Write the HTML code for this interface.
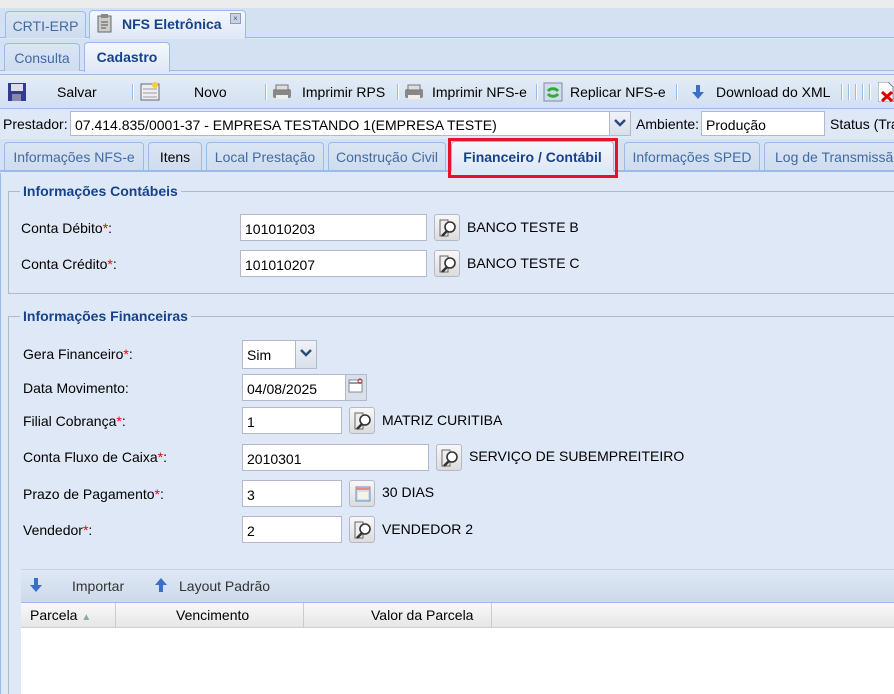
<!DOCTYPE html>
<html style="overflow:hidden"><head><meta charset="utf-8"><style>
*{box-sizing:border-box;margin:0;padding:0}
html,body{width:894px;height:694px;overflow:hidden}
body{background:#dfe8f6;font-family:"Liberation Sans",Arial,sans-serif;font-size:14px;color:#000;position:relative;white-space:nowrap}
.a{position:absolute}
.tab{position:absolute;border:1px solid #99bbe8;border-bottom:none;border-radius:4px 4px 0 0;background:linear-gradient(#dbe6f4,#cedcee);color:#416aa3;font-size:14px;text-align:center}
.tab.on{background:linear-gradient(#f4f8fd,#dfe8f6);color:#15428b;font-weight:bold}
.inp{position:absolute;background:#fff;border:1px solid #b5b8c8;font-size:14px;padding:6px 0 0 4px;height:27px}
.lbl{position:absolute;font-size:14px}
.r{color:#e00}
.btn{position:absolute;width:26px;height:27px;border:1px solid #b5b8c8;border-radius:3px;background:linear-gradient(#f8f8f8,#dcdcdc)}
.btn svg{position:absolute;left:3px;top:3px}
.sep{position:absolute;top:84px;width:2px;height:16px;border-left:1px solid #99bbe8;border-right:1px solid #fff}
.fs{position:absolute;border:1px solid #b5b8c8;border-right:none}
.lg{position:absolute;color:#15428b;font-weight:bold;font-size:14px;padding:0 3px;background:#dfe8f6}
</style></head><body>
<div class="a" style="left:0;top:0;width:894px;height:8px;background:#ececec"></div>
<div class="a" style="left:0;top:8px;width:894px;height:30px;background:#d4e1f2;border-bottom:1px solid #99bbe8"></div>
<div class="tab" style="left:5px;top:11px;width:81px;height:27px;padding-top:6px">CRTI-ERP</div>
<div class="tab on" style="left:89px;top:10px;width:157px;height:29px;padding-top:5px;text-align:left;padding-left:32px;border-bottom:1px solid #dfe8f6">NFS Eletrônica</div>
<svg class="a" style="left:96px;top:13px" width="18" height="20"><rect x="2" y="3" width="13" height="16" fill="#ccc" stroke="#666"/><rect x="5" y="1" width="7" height="4" fill="#888"/><path d="M5 9h7M5 12h7M5 15h5" stroke="#555"/></svg>
<div class="a" style="left:230px;top:13px;width:11px;height:11px;background:#c8d4e6;border:1px solid #99a;font-size:8px;line-height:9px;text-align:center;color:#557">×</div>
<div class="a" style="left:0;top:39px;width:894px;height:32px;background:#d4e1f2;border-bottom:1px solid #99bbe8"></div>
<div class="tab" style="left:4px;top:43px;width:76px;height:28px;padding-top:6px">Consulta</div>
<div class="tab on" style="left:84px;top:42px;width:86px;height:30px;padding-top:6px">Cadastro</div>
<div class="a" style="left:0;top:74px;width:894px;height:35px;background:linear-gradient(#e4ecf7,#d3e0f1);border-top:1px solid #99bbe8;border-bottom:1px solid #99bbe8"></div>
<svg class="a" style="left:8px;top:83px" width="18" height="18"><rect x="0" y="0" width="18" height="18" fill="#34389a"/><rect x="3" y="1" width="12" height="7" fill="#dde"/><rect x="4" y="11" width="9" height="7" fill="#88a"/></svg>
<div class="a" style="left:57px;top:84px">Salvar</div>
<div class="sep" style="left:132px"></div>
<svg class="a" style="left:140px;top:81px" width="20" height="20"><rect x="1" y="3" width="18" height="16" fill="#eee" stroke="#667"/><path d="M3 8h14M3 12h14M3 16h14" stroke="#99a"/><circle cx="15" cy="4" r="3" fill="#fc3"/></svg>
<div class="a" style="left:194px;top:84px">Novo</div>
<div class="sep" style="left:265px"></div>
<svg class="a" style="left:272px;top:84px" width="20" height="16"><rect x="1" y="5" width="18" height="9" rx="2" fill="#888"/><rect x="4" y="1" width="12" height="5" fill="#ddd" stroke="#777"/><rect x="4" y="11" width="12" height="4" fill="#eee"/></svg>
<div class="a" style="left:302px;top:84px">Imprimir RPS</div>
<div class="sep" style="left:397px"></div>
<svg class="a" style="left:404px;top:84px" width="20" height="16"><rect x="1" y="5" width="18" height="9" rx="2" fill="#888"/><rect x="4" y="1" width="12" height="5" fill="#ddd" stroke="#777"/><rect x="4" y="11" width="12" height="4" fill="#eee"/></svg>
<div class="a" style="left:432px;top:84px">Imprimir NFS-e</div>
<div class="sep" style="left:536px"></div>
<svg class="a" style="left:543px;top:82px" width="20" height="20"><rect x="1" y="1" width="18" height="18" fill="#cde" stroke="#889"/><path d="M5 9a6 5 0 0 1 10 0M15 12a6 5 0 0 1-10 0" stroke="#3a3" stroke-width="3" fill="none"/></svg>
<div class="a" style="left:570px;top:84px">Replicar NFS-e</div>
<div class="sep" style="left:676px"></div>
<svg class="a" style="left:692px;top:85px" width="12" height="14"><path d="M4 0h4v7h4l-6 7-6-7h4z" fill="#3a6fc8"/></svg>
<div class="a" style="left:716px;top:84px">Download do XML</div>
<div class="sep" style="left:841px"></div><div class="sep" style="left:848px"></div><div class="sep" style="left:855px"></div><div class="sep" style="left:862px"></div><div class="sep" style="left:869px"></div>
<svg class="a" style="left:878px;top:82px" width="16" height="20"><path d="M0 0h10l5 5v15H0z" fill="#fff" stroke="#888"/><path d="M4 10l10 9M14 10l-10 9" stroke="#d00" stroke-width="3"/></svg>
<div class="a" style="left:0;top:110px;width:894px;height:29px;background:#dfe8f6"></div>
<div class="lbl" style="left:3px;top:116px">Prestador:</div>
<div class="inp" style="left:70px;top:111px;width:540px;height:25px;padding-top:5px">07.414.835/0001-37 - EMPRESA TESTANDO 1(EMPRESA TESTE)</div>
<div class="a" style="left:609px;top:111px;width:22px;height:25px;border:1px solid #b5b8c8;background:linear-gradient(#f0f3f8,#d8e0ea)"></div>
<svg class="a" style="left:614px;top:119px" width="12" height="8"><path d="M1 1l5 5 5-5" stroke="#2a4a80" stroke-width="2.5" fill="none"/></svg>
<div class="lbl" style="left:636px;top:116px">Ambiente:</div>
<div class="inp" style="left:701px;top:111px;width:124px;height:25px;padding-top:5px">Produção</div>
<div class="lbl" style="left:830px;top:116px">Status (Tra</div>
<div class="a" style="left:0;top:139px;width:894px;height:33px;background:#d4e1f2;border-bottom:2px solid #99bbe8"></div>
<div class="tab" style="left:4px;top:142px;width:140px;height:28px;padding-top:6px">Informações NFS-e</div>
<div class="tab" style="left:148px;top:142px;width:54px;height:28px;padding-top:6px;color:#000">Itens</div>
<div class="tab" style="left:206px;top:142px;width:118px;height:28px;padding-top:6px">Local Prestação</div>
<div class="tab" style="left:328px;top:142px;width:118px;height:28px;padding-top:6px">Construção Civil</div>
<div class="tab on" style="left:451px;top:141px;width:163px;height:31px;padding-top:7px;border-bottom:2px solid #dfe8f6">Financeiro / Contábil</div>
<div class="a" style="left:448px;top:138px;width:170px;height:40px;border:3px solid #e8102a"></div>
<div class="tab" style="left:624px;top:142px;width:136px;height:28px;padding-top:6px">Informações SPED</div>
<div class="tab" style="left:764px;top:142px;width:140px;height:28px;padding-top:6px;text-align:left;padding-left:10px">Log de Transmissão</div>
<div class="a" style="left:0;top:173px;width:3px;height:521px;border-left:1px solid #99bbe8"></div>

<div class="fs" style="left:8px;top:191px;width:890px;height:103px"></div>
<div class="lg" style="left:20px;top:183px">Informações Contábeis</div>
<div class="lbl" style="left:21px;top:220px">Conta Débito<span class="r">*</span>:</div>
<div class="inp" style="left:240px;top:214px;width:187px">101010203</div>
<div class="btn" style="left:434px;top:214px"><svg width="20" height="20"><path d="M2 2h8v16H2z" fill="#eee" stroke="#666"/><circle cx="12" cy="9" r="5" fill="#fff" stroke="#333" stroke-width="1.6"/><path d="M9 13l-5 5" stroke="#333" stroke-width="2.5"/></svg></div>
<div class="lbl" style="left:467px;top:219px">BANCO TESTE B</div>
<div class="lbl" style="left:21px;top:256px">Conta Crédito<span class="r">*</span>:</div>
<div class="inp" style="left:240px;top:250px;width:187px">101010207</div>
<div class="btn" style="left:434px;top:250px"><svg width="20" height="20"><path d="M2 2h8v16H2z" fill="#eee" stroke="#666"/><circle cx="12" cy="9" r="5" fill="#fff" stroke="#333" stroke-width="1.6"/><path d="M9 13l-5 5" stroke="#333" stroke-width="2.5"/></svg></div>
<div class="lbl" style="left:467px;top:255px">BANCO TESTE C</div>

<div class="fs" style="left:8px;top:316px;width:890px;height:390px"></div>
<div class="lg" style="left:20px;top:308px">Informações Financeiras</div>
<div class="lbl" style="left:23px;top:346px">Gera Financeiro<span class="r">*</span>:</div>
<div class="inp" style="left:242px;top:340px;width:54px;height:29px">Sim</div>
<div class="a" style="left:295px;top:340px;width:22px;height:29px;border:1px solid #b5b8c8;background:linear-gradient(#f0f3f8,#d8e0ea)"></div>
<svg class="a" style="left:300px;top:349px" width="12" height="8"><path d="M1 1l5 5 5-5" stroke="#2a4a80" stroke-width="2.5" fill="none"/></svg>
<div class="lbl" style="left:23px;top:380px">Data Movimento:</div>
<div class="inp" style="left:242px;top:374px;width:104px">04/08/2025</div>
<div class="a" style="left:345px;top:374px;width:22px;height:27px;border:1px solid #b5b8c8;background:#d8e0ea"></div>
<svg class="a" style="left:348px;top:378px" width="16" height="16"><rect x="1" y="2" width="13" height="12" fill="#fff" stroke="#889"/><path d="M1 5h13" stroke="#99a" stroke-width="2"/><circle cx="12" cy="3" r="2" fill="none" stroke="#a33"/></svg>
<div class="lbl" style="left:23px;top:413px">Filial Cobrança<span class="r">*</span>:</div>
<div class="inp" style="left:242px;top:407px;width:100px">1</div>
<div class="btn" style="left:349px;top:407px"><svg width="20" height="20"><path d="M2 2h8v16H2z" fill="#eee" stroke="#666"/><circle cx="12" cy="9" r="5" fill="#fff" stroke="#333" stroke-width="1.6"/><path d="M9 13l-5 5" stroke="#333" stroke-width="2.5"/></svg></div>
<div class="lbl" style="left:382px;top:412px">MATRIZ CURITIBA</div>
<div class="lbl" style="left:23px;top:449px">Conta Fluxo de Caixa<span class="r">*</span>:</div>
<div class="inp" style="left:242px;top:444px;width:187px">2010301</div>
<div class="btn" style="left:436px;top:444px"><svg width="20" height="20"><path d="M2 2h8v16H2z" fill="#eee" stroke="#666"/><circle cx="12" cy="9" r="5" fill="#fff" stroke="#333" stroke-width="1.6"/><path d="M9 13l-5 5" stroke="#333" stroke-width="2.5"/></svg></div>
<div class="lbl" style="left:469px;top:448px">SERVIÇO DE SUBEMPREITEIRO</div>
<div class="lbl" style="left:23px;top:486px">Prazo de Pagamento<span class="r">*</span>:</div>
<div class="inp" style="left:242px;top:480px;width:100px">3</div>
<div class="btn" style="left:349px;top:480px"><svg width="20" height="20"><rect x="3" y="3" width="14" height="14" fill="#cfe0f0" stroke="#6a8fbf"/><rect x="5" y="8" width="10" height="7" fill="#f4f4e8"/><path d="M3 5h14" stroke="#e87" stroke-width="2"/></svg></div>
<div class="lbl" style="left:382px;top:484px">30 DIAS</div>
<div class="lbl" style="left:23px;top:522px">Vendedor<span class="r">*</span>:</div>
<div class="inp" style="left:242px;top:516px;width:100px">2</div>
<div class="btn" style="left:349px;top:516px"><svg width="20" height="20"><path d="M2 2h8v16H2z" fill="#eee" stroke="#666"/><circle cx="12" cy="9" r="5" fill="#fff" stroke="#333" stroke-width="1.6"/><path d="M9 13l-5 5" stroke="#333" stroke-width="2.5"/></svg></div>
<div class="lbl" style="left:382px;top:521px">VENDEDOR 2</div>

<div class="a" style="left:21px;top:569px;width:880px;height:34px;background:linear-gradient(#dfe8f6,#cdd9ea);border-top:1px solid #c5d3e6;border-bottom:1px solid #99bbe8"></div>
<svg class="a" style="left:30px;top:578px" width="12" height="14"><path d="M4 0h4v7h4l-6 7-6-7h4z" fill="#3a6fc8"/></svg>
<div class="lbl" style="left:72px;top:578px;color:#333">Importar</div>
<svg class="a" style="left:155px;top:578px" width="12" height="14"><path d="M4 14h4V7h4L6 0 0 7h4z" fill="#3a6fc8"/></svg>
<div class="lbl" style="left:179px;top:578px;color:#333">Layout Padrão</div>
<div class="a" style="left:21px;top:603px;width:880px;height:25px;background:linear-gradient(#f9f9f9,#e6e6e6);border-bottom:1px solid #d0d0d0"></div>
<div class="a" style="left:115px;top:603px;width:1px;height:25px;background:#ccc"></div>
<div class="a" style="left:303px;top:603px;width:1px;height:25px;background:#ccc"></div>
<div class="a" style="left:491px;top:603px;width:1px;height:25px;background:#ccc"></div>
<div class="lbl" style="left:30px;top:607px">Parcela <span style="color:#8aa;font-size:10px">▲</span></div>
<div class="lbl" style="left:176px;top:607px">Vencimento</div>
<div class="lbl" style="left:371px;top:607px">Valor da Parcela</div>
<div class="a" style="left:21px;top:628px;width:880px;height:70px;background:#fff"></div>
</body></html>
